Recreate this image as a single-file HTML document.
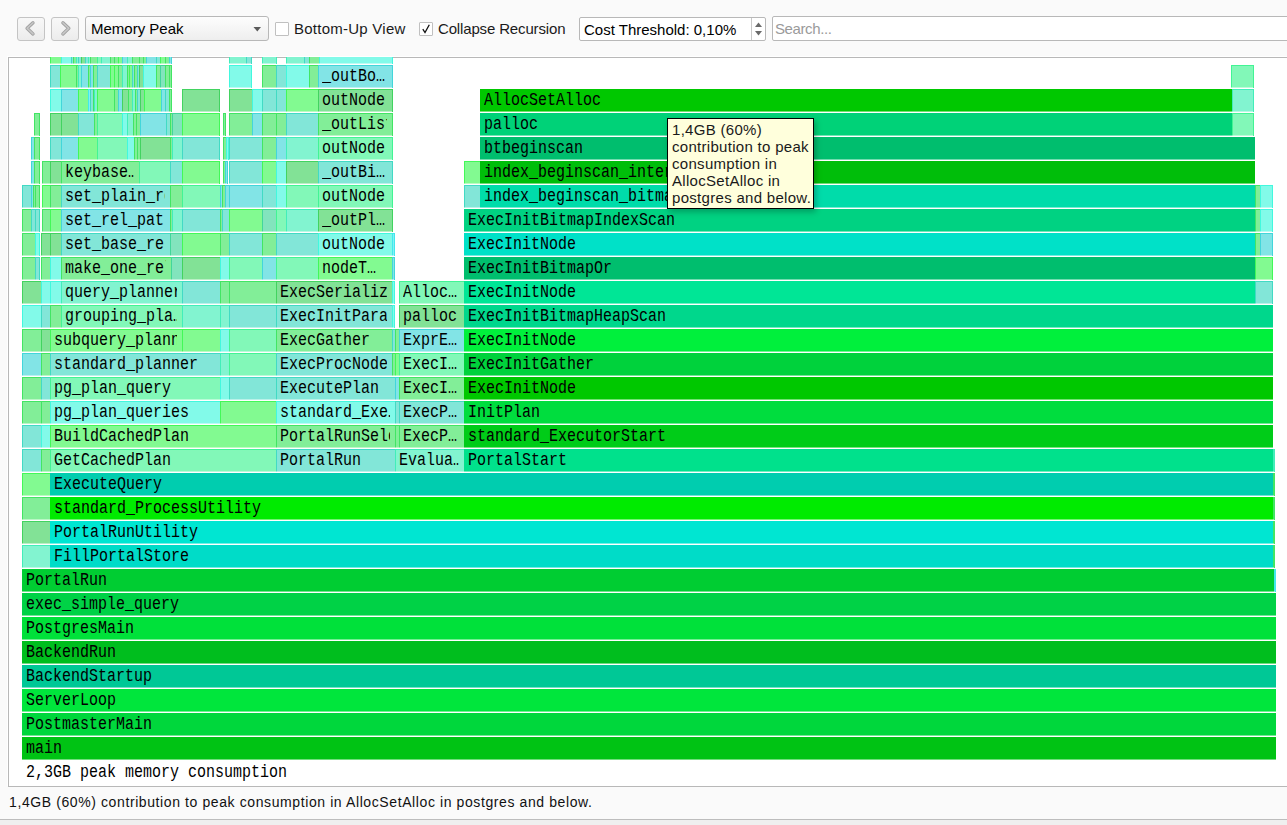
<!DOCTYPE html>
<html><head><meta charset="utf-8">
<style>
html,body{margin:0;padding:0;}
body{width:1287px;height:825px;background:#fafafa;position:relative;overflow:hidden;font-family:"Liberation Sans",sans-serif;}
.abs{position:absolute;}
.btn{position:absolute;top:17px;width:26px;height:22px;border:1px solid #c4c4c4;border-radius:3px;background:linear-gradient(#f8f8f8,#ececec);}
.combo{position:absolute;left:85px;top:16px;width:182px;height:23px;border:1px solid #b8b8b8;border-radius:3px;background:linear-gradient(#fdfdfd,#eeeeee);}
.lbl{position:absolute;font-size:15px;color:#1a1a1a;white-space:nowrap;}
.chk{position:absolute;top:22px;width:12px;height:12px;border:1px solid #c0c0c0;background:#fff;border-radius:1px;}
.frame{position:absolute;left:8px;top:57px;width:1300px;height:728px;border:1px solid #b8b8b8;background:#fff;box-shadow:-1px -1px 0 #ffffff;}
.b{position:absolute;box-sizing:border-box;font-family:"Liberation Mono",monospace;font-size:15px;line-height:23px;padding-left:0;color:#000;white-space:nowrap;overflow:hidden;}
.b span{position:relative;top:1px;margin-left:4px;transform:scaleY(1.17);transform-origin:0 16px;}
.tip{position:absolute;left:667px;top:118px;width:147px;height:91px;border:1px solid #000;background:#ffffdc;font-size:15px;line-height:17px;letter-spacing:0.3px;color:#1a1a1a;padding:2px 0 0 4px;box-sizing:border-box;box-shadow:2px 3px 6px rgba(0,0,0,0.25);}
</style></head><body>
<!-- toolbar -->
<div class="btn" style="left:17px"><svg width="26" height="22" style="position:absolute;left:0;top:0"><path d="M15 4.8 L9.1 10.3 L15 15.9" fill="none" stroke="#a2a2a2" stroke-width="3.4" stroke-linecap="round" stroke-linejoin="round"/><path d="M15 4.8 L9.1 10.3 L15 15.9" fill="none" stroke="#c8c8c8" stroke-width="1.5" stroke-linecap="round" stroke-linejoin="round"/></svg></div>
<div class="btn" style="left:51px"><svg width="26" height="22" style="position:absolute;left:0;top:0"><path d="M10.9 4.8 L16.8 10.3 L10.9 15.9" fill="none" stroke="#a2a2a2" stroke-width="3.4" stroke-linecap="round" stroke-linejoin="round"/><path d="M10.9 4.8 L16.8 10.3 L10.9 15.9" fill="none" stroke="#c8c8c8" stroke-width="1.5" stroke-linecap="round" stroke-linejoin="round"/></svg></div>
<div class="combo"><span class="lbl" style="left:5px;top:3px;color:#000">Memory Peak</span><svg width="10" height="6" style="position:absolute;left:167px;top:10px"><path d="M0.5 0 L8 0 L4.25 4.5 Z" fill="#5a5a5a"/></svg></div>
<div class="chk" style="left:275px"></div>
<span class="lbl" style="left:294px;top:20px;letter-spacing:0.25px">Bottom-Up View</span>
<div class="chk" style="left:419px"><svg width="12" height="12" style="position:absolute;left:0;top:0"><path d="M2.8 6.2 L5 9.6 L9.3 1.8" fill="none" stroke="#111" stroke-width="1.3"/></svg></div>
<span class="lbl" style="left:438px;top:20px;letter-spacing:-0.15px">Collapse Recursion</span>
<div class="abs" style="left:579px;top:17px;width:185px;height:22px;border:1px solid #b8b8b8;border-radius:2px;background:#fff;"></div>
<span class="lbl" style="left:584px;top:21px;color:#000">Cost Threshold: 0,10%</span>
<div class="abs" style="left:751px;top:18px;width:1px;height:22px;background:#c8c8c8"></div>
<svg class="abs" style="left:752px;top:18px" width="13" height="22"><path d="M3 9 L6.5 4.5 L10 9 Z" fill="#6a6a6a"/><path d="M3 13 L6.5 17.5 L10 13 Z" fill="#6a6a6a"/></svg>
<div class="abs" style="left:772px;top:16px;width:1300px;height:23px;border:1px solid #b8b8b8;border-radius:2px;background:#fff;"></div>
<span class="lbl" style="left:775px;top:20px;color:#9a9a9a;letter-spacing:-0.4px">Search...</span>
<!-- frame -->
<div class="frame"></div>
<div class="b" style="left:22px;top:737px;width:1254px;height:23px;background:#00c314;box-shadow:inset 0 -1px 0 rgba(255,255,255,0.45)"><span style="display:block;width:1245px;overflow:hidden">main</span></div>
<div class="b" style="left:22px;top:713px;width:1254px;height:23px;background:#00d73c;box-shadow:inset 0 -1px 0 rgba(255,255,255,0.45)"><span style="display:block;width:1245px;overflow:hidden">PostmasterMain</span></div>
<div class="b" style="left:22px;top:689px;width:1254px;height:23px;background:#00e63c;box-shadow:inset 0 -1px 0 rgba(255,255,255,0.45)"><span style="display:block;width:1245px;overflow:hidden">ServerLoop</span></div>
<div class="b" style="left:22px;top:665px;width:1254px;height:23px;background:#00c896;box-shadow:inset 0 -1px 0 rgba(255,255,255,0.45)"><span style="display:block;width:1245px;overflow:hidden">BackendStartup</span></div>
<div class="b" style="left:22px;top:641px;width:1254px;height:23px;background:#00be1e;box-shadow:inset 0 -1px 0 rgba(255,255,255,0.45)"><span style="display:block;width:1245px;overflow:hidden">BackendRun</span></div>
<div class="b" style="left:22px;top:617px;width:1254px;height:23px;background:#00e13a;box-shadow:inset 0 -1px 0 rgba(255,255,255,0.45)"><span style="display:block;width:1245px;overflow:hidden">PostgresMain</span></div>
<div class="b" style="left:22px;top:593px;width:1254px;height:23px;background:#00d246;box-shadow:inset 0 -1px 0 rgba(255,255,255,0.45)"><span style="display:block;width:1245px;overflow:hidden">exec_simple_query</span></div>
<div class="b" style="left:22px;top:569px;width:1252px;height:23px;background:#00cd32;box-shadow:inset 0 -1px 0 rgba(255,255,255,0.45)"><span style="display:block;width:1243px;overflow:hidden">PortalRun</span></div>
<div class="b" style="left:1274px;top:569px;width:1px;height:23px;background:#82f0f3;box-shadow:inset 0 -1px 0 rgba(255,255,255,0.45),inset 1px 1px 0 #42e9ec,1px 0 0 0 #42e9ec"></div>
<div class="b" style="left:22px;top:545px;width:28px;height:23px;background:#82f4d0;box-shadow:inset 0 -1px 0 rgba(255,255,255,0.45),inset 1px 1px 0 #42eeb9,1px 0 0 0 #42eeb9"></div>
<div class="b" style="left:50px;top:545px;width:1223px;height:23px;background:#00dcc8;box-shadow:inset 0 -1px 0 rgba(255,255,255,0.45)"><span style="display:block;width:1214px;overflow:hidden">FillPortalStore</span></div>
<div class="b" style="left:1273px;top:545px;width:1px;height:23px;background:#82ee98;box-shadow:inset 0 -1px 0 rgba(255,255,255,0.45),inset 1px 1px 0 #42e564,1px 0 0 0 #42e564"></div>
<div class="b" style="left:22px;top:521px;width:28px;height:23px;background:#82e296;box-shadow:inset 0 -1px 0 rgba(255,255,255,0.45),inset 1px 1px 0 #42d360,1px 0 0 0 #42d360"></div>
<div class="b" style="left:50px;top:521px;width:1223px;height:23px;background:#00e6d2;box-shadow:inset 0 -1px 0 rgba(255,255,255,0.45)"><span style="display:block;width:1214px;overflow:hidden">PortalRunUtility</span></div>
<div class="b" style="left:1273px;top:521px;width:1px;height:23px;background:#82ee98;box-shadow:inset 0 -1px 0 rgba(255,255,255,0.45),inset 1px 1px 0 #42e564,1px 0 0 0 #42e564"></div>
<div class="b" style="left:22px;top:497px;width:28px;height:23px;background:#82ee98;box-shadow:inset 0 -1px 0 rgba(255,255,255,0.45),inset 1px 1px 0 #42e564,1px 0 0 0 #42e564"></div>
<div class="b" style="left:50px;top:497px;width:1223px;height:23px;background:#00eb00;box-shadow:inset 0 -1px 0 rgba(255,255,255,0.45)"><span style="display:block;width:1214px;overflow:hidden">standard_ProcessUtility</span></div>
<div class="b" style="left:1273px;top:497px;width:1px;height:23px;background:#82ee98;box-shadow:inset 0 -1px 0 rgba(255,255,255,0.45),inset 1px 1px 0 #42e564,1px 0 0 0 #42e564"></div>
<div class="b" style="left:22px;top:473px;width:28px;height:23px;background:#82fa91;box-shadow:inset 0 -1px 0 rgba(255,255,255,0.45),inset 1px 1px 0 #42f858,1px 0 0 0 #42f858"></div>
<div class="b" style="left:50px;top:473px;width:1223px;height:23px;background:#00cdaf;box-shadow:inset 0 -1px 0 rgba(255,255,255,0.45)"><span style="display:block;width:1214px;overflow:hidden">ExecuteQuery</span></div>
<div class="b" style="left:1273px;top:473px;width:1px;height:23px;background:#82ee98;box-shadow:inset 0 -1px 0 rgba(255,255,255,0.45),inset 1px 1px 0 #42e564,1px 0 0 0 #42e564"></div>
<div class="b" style="left:22px;top:449px;width:19px;height:23px;background:#82e6d8;box-shadow:inset 0 -1px 0 rgba(255,255,255,0.45),inset 1px 1px 0 #42dac4,1px 0 0 0 #42dac4"></div>
<div class="b" style="left:41px;top:449px;width:9px;height:23px;background:#82ee98;box-shadow:inset 0 -1px 0 rgba(255,255,255,0.45),inset 1px 1px 0 #42e564,1px 0 0 0 #42e564"></div>
<div class="b" style="left:50px;top:449px;width:226px;height:23px;background:#82f8b8;box-shadow:inset 0 -1px 0 rgba(255,255,255,0.45),inset 1px 1px 0 #42f494,1px 0 0 0 #42f494"><span style="display:block;width:217px;overflow:hidden">GetCachedPlan</span></div>
<div class="b" style="left:276px;top:449px;width:119px;height:23px;background:#82e6d8;box-shadow:inset 0 -1px 0 rgba(255,255,255,0.45),inset 1px 1px 0 #42dac4,1px 0 0 0 #42dac4"><span style="display:block;width:110px;overflow:hidden">PortalRun</span></div>
<div class="b" style="left:395px;top:449px;width:69px;height:23px;background:#82f4d0;box-shadow:inset 0 -1px 0 rgba(255,255,255,0.45),inset 1px 1px 0 #42eeb9,1px 0 0 0 #42eeb9"><span style="display:block;width:60px;overflow:hidden">Evalua…</span></div>
<div class="b" style="left:464px;top:449px;width:809px;height:23px;background:#00e18c;box-shadow:inset 0 -1px 0 rgba(255,255,255,0.45)"><span style="display:block;width:800px;overflow:hidden">PortalStart</span></div>
<div class="b" style="left:1273px;top:449px;width:1px;height:23px;background:#82f4d0;box-shadow:inset 0 -1px 0 rgba(255,255,255,0.45),inset 1px 1px 0 #42eeb9,1px 0 0 0 #42eeb9"></div>
<div class="b" style="left:22px;top:425px;width:19px;height:23px;background:#82e6d8;box-shadow:inset 0 -1px 0 rgba(255,255,255,0.45),inset 1px 1px 0 #42dac4,1px 0 0 0 #42dac4"></div>
<div class="b" style="left:41px;top:425px;width:9px;height:23px;background:#82fae9;box-shadow:inset 0 -1px 0 rgba(255,255,255,0.45),inset 1px 1px 0 #42f8de,1px 0 0 0 #42f8de"></div>
<div class="b" style="left:50px;top:425px;width:226px;height:23px;background:#82fa91;box-shadow:inset 0 -1px 0 rgba(255,255,255,0.45),inset 1px 1px 0 #42f858,1px 0 0 0 #42f858"><span style="display:block;width:217px;overflow:hidden">BuildCachedPlan</span></div>
<div class="b" style="left:276px;top:425px;width:119px;height:23px;background:#82ee98;box-shadow:inset 0 -1px 0 rgba(255,255,255,0.45),inset 1px 1px 0 #42e564,1px 0 0 0 #42e564"><span style="display:block;width:110px;overflow:hidden">PortalRunSelect</span></div>
<div class="b" style="left:395px;top:425px;width:4px;height:23px;background:#82ee98;box-shadow:inset 0 -1px 0 rgba(255,255,255,0.45),inset 1px 1px 0 #42e564,1px 0 0 0 #42e564"></div>
<div class="b" style="left:399px;top:425px;width:65px;height:23px;background:#82ee98;box-shadow:inset 0 -1px 0 rgba(255,255,255,0.45),inset 1px 1px 0 #42e564,1px 0 0 0 #42e564"><span style="display:block;width:56px;overflow:hidden">ExecP…</span></div>
<div class="b" style="left:464px;top:425px;width:809px;height:23px;background:#00cc18;box-shadow:inset 0 -1px 0 rgba(255,255,255,0.45)"><span style="display:block;width:800px;overflow:hidden">standard_ExecutorStart</span></div>
<div class="b" style="left:22px;top:401px;width:19px;height:23px;background:#82ee98;box-shadow:inset 0 -1px 0 rgba(255,255,255,0.45),inset 1px 1px 0 #42e564,1px 0 0 0 #42e564"></div>
<div class="b" style="left:41px;top:401px;width:9px;height:23px;background:#82ee98;box-shadow:inset 0 -1px 0 rgba(255,255,255,0.45),inset 1px 1px 0 #42e564,1px 0 0 0 #42e564"></div>
<div class="b" style="left:50px;top:401px;width:170px;height:23px;background:#82fae9;box-shadow:inset 0 -1px 0 rgba(255,255,255,0.45),inset 1px 1px 0 #42f8de,1px 0 0 0 #42f8de"><span style="display:block;width:161px;overflow:hidden">pg_plan_queries</span></div>
<div class="b" style="left:220px;top:401px;width:56px;height:23px;background:#82fa91;box-shadow:inset 0 -1px 0 rgba(255,255,255,0.45),inset 1px 1px 0 #42f858,1px 0 0 0 #42f858"></div>
<div class="b" style="left:276px;top:401px;width:119px;height:23px;background:#82fae9;box-shadow:inset 0 -1px 0 rgba(255,255,255,0.45),inset 1px 1px 0 #42f8de,1px 0 0 0 #42f8de"><span style="display:block;width:110px;overflow:hidden">standard_Exe…</span></div>
<div class="b" style="left:395px;top:401px;width:4px;height:23px;background:#82e6d8;box-shadow:inset 0 -1px 0 rgba(255,255,255,0.45),inset 1px 1px 0 #42dac4,1px 0 0 0 #42dac4"></div>
<div class="b" style="left:399px;top:401px;width:65px;height:23px;background:#82e6d8;box-shadow:inset 0 -1px 0 rgba(255,255,255,0.45),inset 1px 1px 0 #42dac4,1px 0 0 0 #42dac4"><span style="display:block;width:56px;overflow:hidden">ExecP…</span></div>
<div class="b" style="left:464px;top:401px;width:809px;height:23px;background:#00dd3e;box-shadow:inset 0 -1px 0 rgba(255,255,255,0.45)"><span style="display:block;width:800px;overflow:hidden">InitPlan</span></div>
<div class="b" style="left:22px;top:377px;width:19px;height:23px;background:#82ee98;box-shadow:inset 0 -1px 0 rgba(255,255,255,0.45),inset 1px 1px 0 #42e564,1px 0 0 0 #42e564"></div>
<div class="b" style="left:41px;top:377px;width:9px;height:23px;background:#82e6d8;box-shadow:inset 0 -1px 0 rgba(255,255,255,0.45),inset 1px 1px 0 #42dac4,1px 0 0 0 #42dac4"></div>
<div class="b" style="left:50px;top:377px;width:170px;height:23px;background:#82f8b8;box-shadow:inset 0 -1px 0 rgba(255,255,255,0.45),inset 1px 1px 0 #42f494,1px 0 0 0 #42f494"><span style="display:block;width:161px;overflow:hidden">pg_plan_query</span></div>
<div class="b" style="left:220px;top:377px;width:9px;height:23px;background:#82fae9;box-shadow:inset 0 -1px 0 rgba(255,255,255,0.45),inset 1px 1px 0 #42f8de,1px 0 0 0 #42f8de"></div>
<div class="b" style="left:229px;top:377px;width:47px;height:23px;background:#82e6d8;box-shadow:inset 0 -1px 0 rgba(255,255,255,0.45),inset 1px 1px 0 #42dac4,1px 0 0 0 #42dac4"></div>
<div class="b" style="left:276px;top:377px;width:119px;height:23px;background:#82e6d8;box-shadow:inset 0 -1px 0 rgba(255,255,255,0.45),inset 1px 1px 0 #42dac4,1px 0 0 0 #42dac4"><span style="display:block;width:110px;overflow:hidden">ExecutePlan</span></div>
<div class="b" style="left:395px;top:377px;width:4px;height:23px;background:#82e4e6;box-shadow:inset 0 -1px 0 rgba(255,255,255,0.45),inset 1px 1px 0 #42d6da,1px 0 0 0 #42d6da"></div>
<div class="b" style="left:399px;top:377px;width:65px;height:23px;background:#82ee98;box-shadow:inset 0 -1px 0 rgba(255,255,255,0.45),inset 1px 1px 0 #42e564,1px 0 0 0 #42e564"><span style="display:block;width:56px;overflow:hidden">ExecI…</span></div>
<div class="b" style="left:464px;top:377px;width:809px;height:23px;background:#00c800;box-shadow:inset 0 -1px 0 rgba(255,255,255,0.45)"><span style="display:block;width:800px;overflow:hidden">ExecInitNode</span></div>
<div class="b" style="left:22px;top:353px;width:19px;height:23px;background:#82e4e6;box-shadow:inset 0 -1px 0 rgba(255,255,255,0.45),inset 1px 1px 0 #42d6da,1px 0 0 0 #42d6da"></div>
<div class="b" style="left:41px;top:353px;width:9px;height:23px;background:#82ee98;box-shadow:inset 0 -1px 0 rgba(255,255,255,0.45),inset 1px 1px 0 #42e564,1px 0 0 0 #42e564"></div>
<div class="b" style="left:50px;top:353px;width:170px;height:23px;background:#82e6d8;box-shadow:inset 0 -1px 0 rgba(255,255,255,0.45),inset 1px 1px 0 #42dac4,1px 0 0 0 #42dac4"><span style="display:block;width:161px;overflow:hidden">standard_planner</span></div>
<div class="b" style="left:220px;top:353px;width:9px;height:23px;background:#82f4d0;box-shadow:inset 0 -1px 0 rgba(255,255,255,0.45),inset 1px 1px 0 #42eeb9,1px 0 0 0 #42eeb9"></div>
<div class="b" style="left:229px;top:353px;width:47px;height:23px;background:#82f8b8;box-shadow:inset 0 -1px 0 rgba(255,255,255,0.45),inset 1px 1px 0 #42f494,1px 0 0 0 #42f494"></div>
<div class="b" style="left:276px;top:353px;width:116px;height:23px;background:#82e6d8;box-shadow:inset 0 -1px 0 rgba(255,255,255,0.45),inset 1px 1px 0 #42dac4,1px 0 0 0 #42dac4"><span style="display:block;width:107px;overflow:hidden">ExecProcNode</span></div>
<div class="b" style="left:392px;top:353px;width:3px;height:23px;background:#82ee98;box-shadow:inset 0 -1px 0 rgba(255,255,255,0.45),inset 1px 1px 0 #42e564,1px 0 0 0 #42e564"></div>
<div class="b" style="left:395px;top:353px;width:4px;height:23px;background:#82fa91;box-shadow:inset 0 -1px 0 rgba(255,255,255,0.45),inset 1px 1px 0 #42f858,1px 0 0 0 #42f858"></div>
<div class="b" style="left:399px;top:353px;width:65px;height:23px;background:#82f8b8;box-shadow:inset 0 -1px 0 rgba(255,255,255,0.45),inset 1px 1px 0 #42f494,1px 0 0 0 #42f494"><span style="display:block;width:56px;overflow:hidden">ExecI…</span></div>
<div class="b" style="left:464px;top:353px;width:809px;height:23px;background:#00d23c;box-shadow:inset 0 -1px 0 rgba(255,255,255,0.45)"><span style="display:block;width:800px;overflow:hidden">ExecInitGather</span></div>
<div class="b" style="left:22px;top:329px;width:19px;height:23px;background:#82ee98;box-shadow:inset 0 -1px 0 rgba(255,255,255,0.45),inset 1px 1px 0 #42e564,1px 0 0 0 #42e564"></div>
<div class="b" style="left:41px;top:329px;width:9px;height:23px;background:#82e296;box-shadow:inset 0 -1px 0 rgba(255,255,255,0.45),inset 1px 1px 0 #42d360,1px 0 0 0 #42d360"></div>
<div class="b" style="left:50px;top:329px;width:132px;height:23px;background:#82fa91;box-shadow:inset 0 -1px 0 rgba(255,255,255,0.45),inset 1px 1px 0 #42f858,1px 0 0 0 #42f858"><span style="display:block;width:123px;overflow:hidden">subquery_planner</span></div>
<div class="b" style="left:182px;top:329px;width:38px;height:23px;background:#82fa91;box-shadow:inset 0 -1px 0 rgba(255,255,255,0.45),inset 1px 1px 0 #42f858,1px 0 0 0 #42f858"></div>
<div class="b" style="left:220px;top:329px;width:9px;height:23px;background:#82fae9;box-shadow:inset 0 -1px 0 rgba(255,255,255,0.45),inset 1px 1px 0 #42f8de,1px 0 0 0 #42f8de"></div>
<div class="b" style="left:229px;top:329px;width:47px;height:23px;background:#82f8b8;box-shadow:inset 0 -1px 0 rgba(255,255,255,0.45),inset 1px 1px 0 #42f494,1px 0 0 0 #42f494"></div>
<div class="b" style="left:276px;top:329px;width:116px;height:23px;background:#82ee98;box-shadow:inset 0 -1px 0 rgba(255,255,255,0.45),inset 1px 1px 0 #42e564,1px 0 0 0 #42e564"><span style="display:block;width:107px;overflow:hidden">ExecGather</span></div>
<div class="b" style="left:392px;top:329px;width:3px;height:23px;background:#82e6d8;box-shadow:inset 0 -1px 0 rgba(255,255,255,0.45),inset 1px 1px 0 #42dac4,1px 0 0 0 #42dac4"></div>
<div class="b" style="left:395px;top:329px;width:4px;height:23px;background:#82ee98;box-shadow:inset 0 -1px 0 rgba(255,255,255,0.45),inset 1px 1px 0 #42e564,1px 0 0 0 #42e564"></div>
<div class="b" style="left:399px;top:329px;width:65px;height:23px;background:#82e4e6;box-shadow:inset 0 -1px 0 rgba(255,255,255,0.45),inset 1px 1px 0 #42d6da,1px 0 0 0 #42d6da"><span style="display:block;width:56px;overflow:hidden">ExprE…</span></div>
<div class="b" style="left:464px;top:329px;width:809px;height:23px;background:#00f03c;box-shadow:inset 0 -1px 0 rgba(255,255,255,0.45)"><span style="display:block;width:800px;overflow:hidden">ExecInitNode</span></div>
<div class="b" style="left:22px;top:305px;width:19px;height:23px;background:#82fae9;box-shadow:inset 0 -1px 0 rgba(255,255,255,0.45),inset 1px 1px 0 #42f8de,1px 0 0 0 #42f8de"></div>
<div class="b" style="left:41px;top:305px;width:9px;height:23px;background:#82e6d8;box-shadow:inset 0 -1px 0 rgba(255,255,255,0.45),inset 1px 1px 0 #42dac4,1px 0 0 0 #42dac4"></div>
<div class="b" style="left:50px;top:305px;width:11px;height:23px;background:#82ee98;box-shadow:inset 0 -1px 0 rgba(255,255,255,0.45),inset 1px 1px 0 #42e564,1px 0 0 0 #42e564"></div>
<div class="b" style="left:61px;top:305px;width:121px;height:23px;background:#82f8b8;box-shadow:inset 0 -1px 0 rgba(255,255,255,0.45),inset 1px 1px 0 #42f494,1px 0 0 0 #42f494"><span style="display:block;width:112px;overflow:hidden">grouping_pla…</span></div>
<div class="b" style="left:182px;top:305px;width:38px;height:23px;background:#82f4d0;box-shadow:inset 0 -1px 0 rgba(255,255,255,0.45),inset 1px 1px 0 #42eeb9,1px 0 0 0 #42eeb9"></div>
<div class="b" style="left:220px;top:305px;width:9px;height:23px;background:#82f4d0;box-shadow:inset 0 -1px 0 rgba(255,255,255,0.45),inset 1px 1px 0 #42eeb9,1px 0 0 0 #42eeb9"></div>
<div class="b" style="left:229px;top:305px;width:47px;height:23px;background:#82e6d8;box-shadow:inset 0 -1px 0 rgba(255,255,255,0.45),inset 1px 1px 0 #42dac4,1px 0 0 0 #42dac4"></div>
<div class="b" style="left:276px;top:305px;width:116px;height:23px;background:#82e6d8;box-shadow:inset 0 -1px 0 rgba(255,255,255,0.45),inset 1px 1px 0 #42dac4,1px 0 0 0 #42dac4"><span style="display:block;width:107px;overflow:hidden">ExecInitParallelPlan</span></div>
<div class="b" style="left:392px;top:305px;width:2px;height:23px;background:#82fae9;box-shadow:inset 0 -1px 0 rgba(255,255,255,0.45),inset 1px 1px 0 #42f8de,1px 0 0 0 #42f8de"></div>
<div class="b" style="left:399px;top:305px;width:65px;height:23px;background:#82e296;box-shadow:inset 0 -1px 0 rgba(255,255,255,0.45),inset 1px 1px 0 #42d360,1px 0 0 0 #42d360"><span style="display:block;width:56px;overflow:hidden">palloc</span></div>
<div class="b" style="left:464px;top:305px;width:809px;height:23px;background:#00d78c;box-shadow:inset 0 -1px 0 rgba(255,255,255,0.45)"><span style="display:block;width:800px;overflow:hidden">ExecInitBitmapHeapScan</span></div>
<div class="b" style="left:22px;top:281px;width:19px;height:23px;background:#82e296;box-shadow:inset 0 -1px 0 rgba(255,255,255,0.45),inset 1px 1px 0 #42d360,1px 0 0 0 #42d360"></div>
<div class="b" style="left:41px;top:281px;width:9px;height:23px;background:#82fae9;box-shadow:inset 0 -1px 0 rgba(255,255,255,0.45),inset 1px 1px 0 #42f8de,1px 0 0 0 #42f8de"></div>
<div class="b" style="left:50px;top:281px;width:11px;height:23px;background:#82fae9;box-shadow:inset 0 -1px 0 rgba(255,255,255,0.45),inset 1px 1px 0 #42f8de,1px 0 0 0 #42f8de"></div>
<div class="b" style="left:61px;top:281px;width:121px;height:23px;background:#82f4d0;box-shadow:inset 0 -1px 0 rgba(255,255,255,0.45),inset 1px 1px 0 #42eeb9,1px 0 0 0 #42eeb9"><span style="display:block;width:112px;overflow:hidden">query_planner</span></div>
<div class="b" style="left:182px;top:281px;width:38px;height:23px;background:#82e6d8;box-shadow:inset 0 -1px 0 rgba(255,255,255,0.45),inset 1px 1px 0 #42dac4,1px 0 0 0 #42dac4"></div>
<div class="b" style="left:220px;top:281px;width:9px;height:23px;background:#82ee98;box-shadow:inset 0 -1px 0 rgba(255,255,255,0.45),inset 1px 1px 0 #42e564,1px 0 0 0 #42e564"></div>
<div class="b" style="left:229px;top:281px;width:47px;height:23px;background:#82ee98;box-shadow:inset 0 -1px 0 rgba(255,255,255,0.45),inset 1px 1px 0 #42e564,1px 0 0 0 #42e564"></div>
<div class="b" style="left:276px;top:281px;width:116px;height:23px;background:#82e296;box-shadow:inset 0 -1px 0 rgba(255,255,255,0.45),inset 1px 1px 0 #42d360,1px 0 0 0 #42d360"><span style="display:block;width:107px;overflow:hidden">ExecSerializePlan</span></div>
<div class="b" style="left:392px;top:281px;width:2px;height:23px;background:#82fae9;box-shadow:inset 0 -1px 0 rgba(255,255,255,0.45),inset 1px 1px 0 #42f8de,1px 0 0 0 #42f8de"></div>
<div class="b" style="left:399px;top:281px;width:65px;height:23px;background:#82f8b8;box-shadow:inset 0 -1px 0 rgba(255,255,255,0.45),inset 1px 1px 0 #42f494,1px 0 0 0 #42f494"><span style="display:block;width:56px;overflow:hidden">Alloc…</span></div>
<div class="b" style="left:464px;top:281px;width:791px;height:23px;background:#00e696;box-shadow:inset 0 -1px 0 rgba(255,255,255,0.45)"><span style="display:block;width:782px;overflow:hidden">ExecInitNode</span></div>
<div class="b" style="left:1255px;top:281px;width:17px;height:23px;background:#82e6d8;box-shadow:inset 0 -1px 0 rgba(255,255,255,0.45),inset 1px 1px 0 #42dac4,1px 0 0 0 #42dac4"></div>
<div class="b" style="left:22px;top:257px;width:13px;height:23px;background:#82ee98;box-shadow:inset 0 -1px 0 rgba(255,255,255,0.45),inset 1px 1px 0 #42e564,1px 0 0 0 #42e564"></div>
<div class="b" style="left:35px;top:257px;width:4px;height:23px;background:#82e6d8;box-shadow:inset 0 -1px 0 rgba(255,255,255,0.45),inset 1px 1px 0 #42dac4,1px 0 0 0 #42dac4"></div>
<div class="b" style="left:41px;top:257px;width:9px;height:23px;background:#82ee98;box-shadow:inset 0 -1px 0 rgba(255,255,255,0.45),inset 1px 1px 0 #42e564,1px 0 0 0 #42e564"></div>
<div class="b" style="left:50px;top:257px;width:11px;height:23px;background:#82fae9;box-shadow:inset 0 -1px 0 rgba(255,255,255,0.45),inset 1px 1px 0 #42f8de,1px 0 0 0 #42f8de"></div>
<div class="b" style="left:61px;top:257px;width:110px;height:23px;background:#82ee98;box-shadow:inset 0 -1px 0 rgba(255,255,255,0.45),inset 1px 1px 0 #42e564,1px 0 0 0 #42e564"><span style="display:block;width:101px;overflow:hidden">make_one_rel</span></div>
<div class="b" style="left:171px;top:257px;width:11px;height:23px;background:#82e4bd;box-shadow:inset 0 -1px 0 rgba(255,255,255,0.45),inset 1px 1px 0 #42d69b,1px 0 0 0 #42d69b"></div>
<div class="b" style="left:182px;top:257px;width:38px;height:23px;background:#82e296;box-shadow:inset 0 -1px 0 rgba(255,255,255,0.45),inset 1px 1px 0 #42d360,1px 0 0 0 #42d360"></div>
<div class="b" style="left:220px;top:257px;width:9px;height:23px;background:#82fae9;box-shadow:inset 0 -1px 0 rgba(255,255,255,0.45),inset 1px 1px 0 #42f8de,1px 0 0 0 #42f8de"></div>
<div class="b" style="left:229px;top:257px;width:33px;height:23px;background:#82f8b8;box-shadow:inset 0 -1px 0 rgba(255,255,255,0.45),inset 1px 1px 0 #42f494,1px 0 0 0 #42f494"></div>
<div class="b" style="left:262px;top:257px;width:14px;height:23px;background:#82e4e6;box-shadow:inset 0 -1px 0 rgba(255,255,255,0.45),inset 1px 1px 0 #42d6da,1px 0 0 0 #42d6da"></div>
<div class="b" style="left:276px;top:257px;width:42px;height:23px;background:#82f8b8;box-shadow:inset 0 -1px 0 rgba(255,255,255,0.45),inset 1px 1px 0 #42f494,1px 0 0 0 #42f494"></div>
<div class="b" style="left:318px;top:257px;width:74px;height:23px;background:#82fa91;box-shadow:inset 0 -1px 0 rgba(255,255,255,0.45),inset 1px 1px 0 #42f858,1px 0 0 0 #42f858"><span style="display:block;width:65px;overflow:hidden">nodeT…</span></div>
<div class="b" style="left:392px;top:257px;width:2px;height:23px;background:#82e4e6;box-shadow:inset 0 -1px 0 rgba(255,255,255,0.45),inset 1px 1px 0 #42d6da,1px 0 0 0 #42d6da"></div>
<div class="b" style="left:464px;top:257px;width:791px;height:23px;background:#00be6e;box-shadow:inset 0 -1px 0 rgba(255,255,255,0.45)"><span style="display:block;width:782px;overflow:hidden">ExecInitBitmapOr</span></div>
<div class="b" style="left:1255px;top:257px;width:17px;height:23px;background:#82fa91;box-shadow:inset 0 -1px 0 rgba(255,255,255,0.45),inset 1px 1px 0 #42f858,1px 0 0 0 #42f858"></div>
<div class="b" style="left:22px;top:233px;width:13px;height:23px;background:#82ee98;box-shadow:inset 0 -1px 0 rgba(255,255,255,0.45),inset 1px 1px 0 #42e564,1px 0 0 0 #42e564"></div>
<div class="b" style="left:35px;top:233px;width:4px;height:23px;background:#82fae9;box-shadow:inset 0 -1px 0 rgba(255,255,255,0.45),inset 1px 1px 0 #42f8de,1px 0 0 0 #42f8de"></div>
<div class="b" style="left:41px;top:233px;width:9px;height:23px;background:#82e296;box-shadow:inset 0 -1px 0 rgba(255,255,255,0.45),inset 1px 1px 0 #42d360,1px 0 0 0 #42d360"></div>
<div class="b" style="left:50px;top:233px;width:11px;height:23px;background:#82e296;box-shadow:inset 0 -1px 0 rgba(255,255,255,0.45),inset 1px 1px 0 #42d360,1px 0 0 0 #42d360"></div>
<div class="b" style="left:61px;top:233px;width:109px;height:23px;background:#82e6d8;box-shadow:inset 0 -1px 0 rgba(255,255,255,0.45),inset 1px 1px 0 #42dac4,1px 0 0 0 #42dac4"><span style="display:block;width:100px;overflow:hidden">set_base_rel</span></div>
<div class="b" style="left:170px;top:233px;width:12px;height:23px;background:#82e4bd;box-shadow:inset 0 -1px 0 rgba(255,255,255,0.45),inset 1px 1px 0 #42d69b,1px 0 0 0 #42d69b"></div>
<div class="b" style="left:182px;top:233px;width:38px;height:23px;background:#82fa91;box-shadow:inset 0 -1px 0 rgba(255,255,255,0.45),inset 1px 1px 0 #42f858,1px 0 0 0 #42f858"></div>
<div class="b" style="left:220px;top:233px;width:9px;height:23px;background:#82ee98;box-shadow:inset 0 -1px 0 rgba(255,255,255,0.45),inset 1px 1px 0 #42e564,1px 0 0 0 #42e564"></div>
<div class="b" style="left:229px;top:233px;width:33px;height:23px;background:#82e6d8;box-shadow:inset 0 -1px 0 rgba(255,255,255,0.45),inset 1px 1px 0 #42dac4,1px 0 0 0 #42dac4"></div>
<div class="b" style="left:262px;top:233px;width:14px;height:23px;background:#82ee98;box-shadow:inset 0 -1px 0 rgba(255,255,255,0.45),inset 1px 1px 0 #42e564,1px 0 0 0 #42e564"></div>
<div class="b" style="left:276px;top:233px;width:42px;height:23px;background:#82e6d8;box-shadow:inset 0 -1px 0 rgba(255,255,255,0.45),inset 1px 1px 0 #42dac4,1px 0 0 0 #42dac4"></div>
<div class="b" style="left:318px;top:233px;width:74px;height:23px;background:#82fae9;box-shadow:inset 0 -1px 0 rgba(255,255,255,0.45),inset 1px 1px 0 #42f8de,1px 0 0 0 #42f8de"><span style="display:block;width:65px;overflow:hidden">outNode</span></div>
<div class="b" style="left:392px;top:233px;width:2px;height:23px;background:#82f0f3;box-shadow:inset 0 -1px 0 rgba(255,255,255,0.45),inset 1px 1px 0 #42e9ec,1px 0 0 0 #42e9ec"></div>
<div class="b" style="left:464px;top:233px;width:791px;height:23px;background:#00e1c8;box-shadow:inset 0 -1px 0 rgba(255,255,255,0.45)"><span style="display:block;width:782px;overflow:hidden">ExecInitNode</span></div>
<div class="b" style="left:1255px;top:233px;width:5px;height:23px;background:#82ee98;box-shadow:inset 0 -1px 0 rgba(255,255,255,0.45),inset 1px 1px 0 #42e564,1px 0 0 0 #42e564"></div>
<div class="b" style="left:1260px;top:233px;width:12px;height:23px;background:#82e4e6;box-shadow:inset 0 -1px 0 rgba(255,255,255,0.45),inset 1px 1px 0 #42d6da,1px 0 0 0 #42d6da"></div>
<div class="b" style="left:22px;top:209px;width:9px;height:23px;background:#82ee98;box-shadow:inset 0 -1px 0 rgba(255,255,255,0.45),inset 1px 1px 0 #42e564,1px 0 0 0 #42e564"></div>
<div class="b" style="left:31px;top:209px;width:4px;height:23px;background:#82e6d8;box-shadow:inset 0 -1px 0 rgba(255,255,255,0.45),inset 1px 1px 0 #42dac4,1px 0 0 0 #42dac4"></div>
<div class="b" style="left:35px;top:209px;width:4px;height:23px;background:#82e6d8;box-shadow:inset 0 -1px 0 rgba(255,255,255,0.45),inset 1px 1px 0 #42dac4,1px 0 0 0 #42dac4"></div>
<div class="b" style="left:42px;top:209px;width:8px;height:23px;background:#82ee98;box-shadow:inset 0 -1px 0 rgba(255,255,255,0.45),inset 1px 1px 0 #42e564,1px 0 0 0 #42e564"></div>
<div class="b" style="left:50px;top:209px;width:11px;height:23px;background:#82fa91;box-shadow:inset 0 -1px 0 rgba(255,255,255,0.45),inset 1px 1px 0 #42f858,1px 0 0 0 #42f858"></div>
<div class="b" style="left:61px;top:209px;width:109px;height:23px;background:#82e4e6;box-shadow:inset 0 -1px 0 rgba(255,255,255,0.45),inset 1px 1px 0 #42d6da,1px 0 0 0 #42d6da"><span style="display:block;width:100px;overflow:hidden">set_rel_pat</span></div>
<div class="b" style="left:170px;top:209px;width:2px;height:23px;background:#82ee98;box-shadow:inset 0 -1px 0 rgba(255,255,255,0.45),inset 1px 1px 0 #42e564,1px 0 0 0 #42e564"></div>
<div class="b" style="left:172px;top:209px;width:10px;height:23px;background:#82f4d0;box-shadow:inset 0 -1px 0 rgba(255,255,255,0.45),inset 1px 1px 0 #42eeb9,1px 0 0 0 #42eeb9"></div>
<div class="b" style="left:182px;top:209px;width:38px;height:23px;background:#82e6d8;box-shadow:inset 0 -1px 0 rgba(255,255,255,0.45),inset 1px 1px 0 #42dac4,1px 0 0 0 #42dac4"></div>
<div class="b" style="left:220px;top:209px;width:2px;height:23px;background:#82ee98;box-shadow:inset 0 -1px 0 rgba(255,255,255,0.45),inset 1px 1px 0 #42e564,1px 0 0 0 #42e564"></div>
<div class="b" style="left:222px;top:209px;width:7px;height:23px;background:#82e6d8;box-shadow:inset 0 -1px 0 rgba(255,255,255,0.45),inset 1px 1px 0 #42dac4,1px 0 0 0 #42dac4"></div>
<div class="b" style="left:229px;top:209px;width:33px;height:23px;background:#82fa91;box-shadow:inset 0 -1px 0 rgba(255,255,255,0.45),inset 1px 1px 0 #42f858,1px 0 0 0 #42f858"></div>
<div class="b" style="left:262px;top:209px;width:14px;height:23px;background:#82e4bd;box-shadow:inset 0 -1px 0 rgba(255,255,255,0.45),inset 1px 1px 0 #42d69b,1px 0 0 0 #42d69b"></div>
<div class="b" style="left:276px;top:209px;width:10px;height:23px;background:#82f8b8;box-shadow:inset 0 -1px 0 rgba(255,255,255,0.45),inset 1px 1px 0 #42f494,1px 0 0 0 #42f494"></div>
<div class="b" style="left:286px;top:209px;width:32px;height:23px;background:#82f4d0;box-shadow:inset 0 -1px 0 rgba(255,255,255,0.45),inset 1px 1px 0 #42eeb9,1px 0 0 0 #42eeb9"></div>
<div class="b" style="left:318px;top:209px;width:74px;height:23px;background:#82e296;box-shadow:inset 0 -1px 0 rgba(255,255,255,0.45),inset 1px 1px 0 #42d360,1px 0 0 0 #42d360"><span style="display:block;width:65px;overflow:hidden">_outPl…</span></div>
<div class="b" style="left:464px;top:209px;width:791px;height:23px;background:#00d282;box-shadow:inset 0 -1px 0 rgba(255,255,255,0.45)"><span style="display:block;width:782px;overflow:hidden">ExecInitBitmapIndexScan</span></div>
<div class="b" style="left:1255px;top:209px;width:5px;height:23px;background:#82ee98;box-shadow:inset 0 -1px 0 rgba(255,255,255,0.45),inset 1px 1px 0 #42e564,1px 0 0 0 #42e564"></div>
<div class="b" style="left:1260px;top:209px;width:12px;height:23px;background:#82fae9;box-shadow:inset 0 -1px 0 rgba(255,255,255,0.45),inset 1px 1px 0 #42f8de,1px 0 0 0 #42f8de"></div>
<div class="b" style="left:22px;top:185px;width:9px;height:23px;background:#82e6d8;box-shadow:inset 0 -1px 0 rgba(255,255,255,0.45),inset 1px 1px 0 #42dac4,1px 0 0 0 #42dac4"></div>
<div class="b" style="left:31px;top:185px;width:2px;height:23px;background:#82e4e6;box-shadow:inset 0 -1px 0 rgba(255,255,255,0.45),inset 1px 1px 0 #42d6da,1px 0 0 0 #42d6da"></div>
<div class="b" style="left:33px;top:185px;width:2px;height:23px;background:#82ee98;box-shadow:inset 0 -1px 0 rgba(255,255,255,0.45),inset 1px 1px 0 #42e564,1px 0 0 0 #42e564"></div>
<div class="b" style="left:35px;top:185px;width:4px;height:23px;background:#82ee98;box-shadow:inset 0 -1px 0 rgba(255,255,255,0.45),inset 1px 1px 0 #42e564,1px 0 0 0 #42e564"></div>
<div class="b" style="left:42px;top:185px;width:8px;height:23px;background:#82fa91;box-shadow:inset 0 -1px 0 rgba(255,255,255,0.45),inset 1px 1px 0 #42f858,1px 0 0 0 #42f858"></div>
<div class="b" style="left:50px;top:185px;width:11px;height:23px;background:#82ee98;box-shadow:inset 0 -1px 0 rgba(255,255,255,0.45),inset 1px 1px 0 #42e564,1px 0 0 0 #42e564"></div>
<div class="b" style="left:61px;top:185px;width:109px;height:23px;background:#82e6d8;box-shadow:inset 0 -1px 0 rgba(255,255,255,0.45),inset 1px 1px 0 #42dac4,1px 0 0 0 #42dac4"><span style="display:block;width:100px;overflow:hidden">set_plain_rel</span></div>
<div class="b" style="left:170px;top:185px;width:12px;height:23px;background:#82ee98;box-shadow:inset 0 -1px 0 rgba(255,255,255,0.45),inset 1px 1px 0 #42e564,1px 0 0 0 #42e564"></div>
<div class="b" style="left:182px;top:185px;width:38px;height:23px;background:#82f8b8;box-shadow:inset 0 -1px 0 rgba(255,255,255,0.45),inset 1px 1px 0 #42f494,1px 0 0 0 #42f494"></div>
<div class="b" style="left:220px;top:185px;width:2px;height:23px;background:#82e4e6;box-shadow:inset 0 -1px 0 rgba(255,255,255,0.45),inset 1px 1px 0 #42d6da,1px 0 0 0 #42d6da"></div>
<div class="b" style="left:222px;top:185px;width:3px;height:23px;background:#82ee98;box-shadow:inset 0 -1px 0 rgba(255,255,255,0.45),inset 1px 1px 0 #42e564,1px 0 0 0 #42e564"></div>
<div class="b" style="left:225px;top:185px;width:4px;height:23px;background:#82e4e6;box-shadow:inset 0 -1px 0 rgba(255,255,255,0.45),inset 1px 1px 0 #42d6da,1px 0 0 0 #42d6da"></div>
<div class="b" style="left:229px;top:185px;width:33px;height:23px;background:#82e4e6;box-shadow:inset 0 -1px 0 rgba(255,255,255,0.45),inset 1px 1px 0 #42d6da,1px 0 0 0 #42d6da"></div>
<div class="b" style="left:262px;top:185px;width:14px;height:23px;background:#82e6d8;box-shadow:inset 0 -1px 0 rgba(255,255,255,0.45),inset 1px 1px 0 #42dac4,1px 0 0 0 #42dac4"></div>
<div class="b" style="left:276px;top:185px;width:10px;height:23px;background:#82fae9;box-shadow:inset 0 -1px 0 rgba(255,255,255,0.45),inset 1px 1px 0 #42f8de,1px 0 0 0 #42f8de"></div>
<div class="b" style="left:286px;top:185px;width:32px;height:23px;background:#82f8b8;box-shadow:inset 0 -1px 0 rgba(255,255,255,0.45),inset 1px 1px 0 #42f494,1px 0 0 0 #42f494"></div>
<div class="b" style="left:318px;top:185px;width:74px;height:23px;background:#82f8b8;box-shadow:inset 0 -1px 0 rgba(255,255,255,0.45),inset 1px 1px 0 #42f494,1px 0 0 0 #42f494"><span style="display:block;width:65px;overflow:hidden">outNode</span></div>
<div class="b" style="left:464px;top:185px;width:16px;height:23px;background:#82e6d8;box-shadow:inset 0 -1px 0 rgba(255,255,255,0.45),inset 1px 1px 0 #42dac4,1px 0 0 0 #42dac4"></div>
<div class="b" style="left:480px;top:185px;width:775px;height:23px;background:#00dcaa;box-shadow:inset 0 -1px 0 rgba(255,255,255,0.45)"><span style="display:block;width:766px;overflow:hidden">index_beginscan_bitmap</span></div>
<div class="b" style="left:1255px;top:185px;width:5px;height:23px;background:#82ee98;box-shadow:inset 0 -1px 0 rgba(255,255,255,0.45),inset 1px 1px 0 #42e564,1px 0 0 0 #42e564"></div>
<div class="b" style="left:1260px;top:185px;width:12px;height:23px;background:#82fae9;box-shadow:inset 0 -1px 0 rgba(255,255,255,0.45),inset 1px 1px 0 #42f8de,1px 0 0 0 #42f8de"></div>
<div class="b" style="left:31px;top:161px;width:3px;height:23px;background:#82e4e6;box-shadow:inset 0 -1px 0 rgba(255,255,255,0.45),inset 1px 1px 0 #42d6da,1px 0 0 0 #42d6da"></div>
<div class="b" style="left:34px;top:161px;width:5px;height:23px;background:#82ee98;box-shadow:inset 0 -1px 0 rgba(255,255,255,0.45),inset 1px 1px 0 #42e564,1px 0 0 0 #42e564"></div>
<div class="b" style="left:42px;top:161px;width:8px;height:23px;background:#82ee98;box-shadow:inset 0 -1px 0 rgba(255,255,255,0.45),inset 1px 1px 0 #42e564,1px 0 0 0 #42e564"></div>
<div class="b" style="left:50px;top:161px;width:11px;height:23px;background:#82e296;box-shadow:inset 0 -1px 0 rgba(255,255,255,0.45),inset 1px 1px 0 #42d360,1px 0 0 0 #42d360"></div>
<div class="b" style="left:61px;top:161px;width:78px;height:23px;background:#82ee98;box-shadow:inset 0 -1px 0 rgba(255,255,255,0.45),inset 1px 1px 0 #42e564,1px 0 0 0 #42e564"><span style="display:block;width:69px;overflow:hidden">keybase…</span></div>
<div class="b" style="left:139px;top:161px;width:31px;height:23px;background:#82f8b8;box-shadow:inset 0 -1px 0 rgba(255,255,255,0.45),inset 1px 1px 0 #42f494,1px 0 0 0 #42f494"></div>
<div class="b" style="left:170px;top:161px;width:12px;height:23px;background:#82e6d8;box-shadow:inset 0 -1px 0 rgba(255,255,255,0.45),inset 1px 1px 0 #42dac4,1px 0 0 0 #42dac4"></div>
<div class="b" style="left:182px;top:161px;width:37px;height:23px;background:#82fa91;box-shadow:inset 0 -1px 0 rgba(255,255,255,0.45),inset 1px 1px 0 #42f858,1px 0 0 0 #42f858"></div>
<div class="b" style="left:223px;top:161px;width:2px;height:23px;background:#82ee98;box-shadow:inset 0 -1px 0 rgba(255,255,255,0.45),inset 1px 1px 0 #42e564,1px 0 0 0 #42e564"></div>
<div class="b" style="left:225px;top:161px;width:2px;height:23px;background:#82e4e6;box-shadow:inset 0 -1px 0 rgba(255,255,255,0.45),inset 1px 1px 0 #42d6da,1px 0 0 0 #42d6da"></div>
<div class="b" style="left:229px;top:161px;width:33px;height:23px;background:#82e6d8;box-shadow:inset 0 -1px 0 rgba(255,255,255,0.45),inset 1px 1px 0 #42dac4,1px 0 0 0 #42dac4"></div>
<div class="b" style="left:262px;top:161px;width:14px;height:23px;background:#82fa91;box-shadow:inset 0 -1px 0 rgba(255,255,255,0.45),inset 1px 1px 0 #42f858,1px 0 0 0 #42f858"></div>
<div class="b" style="left:276px;top:161px;width:10px;height:23px;background:#82fae9;box-shadow:inset 0 -1px 0 rgba(255,255,255,0.45),inset 1px 1px 0 #42f8de,1px 0 0 0 #42f8de"></div>
<div class="b" style="left:286px;top:161px;width:32px;height:23px;background:#82e296;box-shadow:inset 0 -1px 0 rgba(255,255,255,0.45),inset 1px 1px 0 #42d360,1px 0 0 0 #42d360"></div>
<div class="b" style="left:318px;top:161px;width:74px;height:23px;background:#82e6d8;box-shadow:inset 0 -1px 0 rgba(255,255,255,0.45),inset 1px 1px 0 #42dac4,1px 0 0 0 #42dac4"><span style="display:block;width:65px;overflow:hidden">_outBi…</span></div>
<div class="b" style="left:464px;top:161px;width:16px;height:23px;background:#82fa91;box-shadow:inset 0 -1px 0 rgba(255,255,255,0.45),inset 1px 1px 0 #42f858,1px 0 0 0 #42f858"></div>
<div class="b" style="left:480px;top:161px;width:775px;height:23px;background:#00be0a;box-shadow:inset 0 -1px 0 rgba(255,255,255,0.45)"><span style="display:block;width:766px;overflow:hidden">index_beginscan_internal</span></div>
<div class="b" style="left:31px;top:137px;width:3px;height:23px;background:#82e4e6;box-shadow:inset 0 -1px 0 rgba(255,255,255,0.45),inset 1px 1px 0 #42d6da,1px 0 0 0 #42d6da"></div>
<div class="b" style="left:34px;top:137px;width:5px;height:23px;background:#82ee98;box-shadow:inset 0 -1px 0 rgba(255,255,255,0.45),inset 1px 1px 0 #42e564,1px 0 0 0 #42e564"></div>
<div class="b" style="left:50px;top:137px;width:11px;height:23px;background:#82e6d8;box-shadow:inset 0 -1px 0 rgba(255,255,255,0.45),inset 1px 1px 0 #42dac4,1px 0 0 0 #42dac4"></div>
<div class="b" style="left:61px;top:137px;width:17px;height:23px;background:#82e4e6;box-shadow:inset 0 -1px 0 rgba(255,255,255,0.45),inset 1px 1px 0 #42d6da,1px 0 0 0 #42d6da"></div>
<div class="b" style="left:78px;top:137px;width:19px;height:23px;background:#82fa91;box-shadow:inset 0 -1px 0 rgba(255,255,255,0.45),inset 1px 1px 0 #42f858,1px 0 0 0 #42f858"></div>
<div class="b" style="left:97px;top:137px;width:30px;height:23px;background:#82f8b8;box-shadow:inset 0 -1px 0 rgba(255,255,255,0.45),inset 1px 1px 0 #42f494,1px 0 0 0 #42f494"></div>
<div class="b" style="left:127px;top:137px;width:7px;height:23px;background:#82fae9;box-shadow:inset 0 -1px 0 rgba(255,255,255,0.45),inset 1px 1px 0 #42f8de,1px 0 0 0 #42f8de"></div>
<div class="b" style="left:134px;top:137px;width:3px;height:23px;background:#82ee98;box-shadow:inset 0 -1px 0 rgba(255,255,255,0.45),inset 1px 1px 0 #42e564,1px 0 0 0 #42e564"></div>
<div class="b" style="left:137px;top:137px;width:3px;height:23px;background:#82ee98;box-shadow:inset 0 -1px 0 rgba(255,255,255,0.45),inset 1px 1px 0 #42e564,1px 0 0 0 #42e564"></div>
<div class="b" style="left:140px;top:137px;width:30px;height:23px;background:#82e296;box-shadow:inset 0 -1px 0 rgba(255,255,255,0.45),inset 1px 1px 0 #42d360,1px 0 0 0 #42d360"></div>
<div class="b" style="left:170px;top:137px;width:2px;height:23px;background:#82ee98;box-shadow:inset 0 -1px 0 rgba(255,255,255,0.45),inset 1px 1px 0 #42e564,1px 0 0 0 #42e564"></div>
<div class="b" style="left:172px;top:137px;width:10px;height:23px;background:#82f4d0;box-shadow:inset 0 -1px 0 rgba(255,255,255,0.45),inset 1px 1px 0 #42eeb9,1px 0 0 0 #42eeb9"></div>
<div class="b" style="left:182px;top:137px;width:37px;height:23px;background:#82e6d8;box-shadow:inset 0 -1px 0 rgba(255,255,255,0.45),inset 1px 1px 0 #42dac4,1px 0 0 0 #42dac4"></div>
<div class="b" style="left:223px;top:137px;width:3px;height:23px;background:#82ee98;box-shadow:inset 0 -1px 0 rgba(255,255,255,0.45),inset 1px 1px 0 #42e564,1px 0 0 0 #42e564"></div>
<div class="b" style="left:226px;top:137px;width:2px;height:23px;background:#82fae9;box-shadow:inset 0 -1px 0 rgba(255,255,255,0.45),inset 1px 1px 0 #42f8de,1px 0 0 0 #42f8de"></div>
<div class="b" style="left:229px;top:137px;width:33px;height:23px;background:#82e6d8;box-shadow:inset 0 -1px 0 rgba(255,255,255,0.45),inset 1px 1px 0 #42dac4,1px 0 0 0 #42dac4"></div>
<div class="b" style="left:262px;top:137px;width:14px;height:23px;background:#82ee98;box-shadow:inset 0 -1px 0 rgba(255,255,255,0.45),inset 1px 1px 0 #42e564,1px 0 0 0 #42e564"></div>
<div class="b" style="left:276px;top:137px;width:10px;height:23px;background:#82e4e6;box-shadow:inset 0 -1px 0 rgba(255,255,255,0.45),inset 1px 1px 0 #42d6da,1px 0 0 0 #42d6da"></div>
<div class="b" style="left:286px;top:137px;width:32px;height:23px;background:#82f4d0;box-shadow:inset 0 -1px 0 rgba(255,255,255,0.45),inset 1px 1px 0 #42eeb9,1px 0 0 0 #42eeb9"></div>
<div class="b" style="left:318px;top:137px;width:74px;height:23px;background:#82f8b8;box-shadow:inset 0 -1px 0 rgba(255,255,255,0.45),inset 1px 1px 0 #42f494,1px 0 0 0 #42f494"><span style="display:block;width:65px;overflow:hidden">outNode</span></div>
<div class="b" style="left:480px;top:137px;width:775px;height:23px;background:#00be6e;box-shadow:inset 0 -1px 0 rgba(255,255,255,0.45)"><span style="display:block;width:766px;overflow:hidden">btbeginscan</span></div>
<div class="b" style="left:34px;top:113px;width:5px;height:23px;background:#82ee98;box-shadow:inset 0 -1px 0 rgba(255,255,255,0.45),inset 1px 1px 0 #42e564,1px 0 0 0 #42e564"></div>
<div class="b" style="left:50px;top:113px;width:11px;height:23px;background:#82e296;box-shadow:inset 0 -1px 0 rgba(255,255,255,0.45),inset 1px 1px 0 #42d360,1px 0 0 0 #42d360"></div>
<div class="b" style="left:61px;top:113px;width:17px;height:23px;background:#82e296;box-shadow:inset 0 -1px 0 rgba(255,255,255,0.45),inset 1px 1px 0 #42d360,1px 0 0 0 #42d360"></div>
<div class="b" style="left:78px;top:113px;width:16px;height:23px;background:#82e6d8;box-shadow:inset 0 -1px 0 rgba(255,255,255,0.45),inset 1px 1px 0 #42dac4,1px 0 0 0 #42dac4"></div>
<div class="b" style="left:94px;top:113px;width:3px;height:23px;background:#82ee98;box-shadow:inset 0 -1px 0 rgba(255,255,255,0.45),inset 1px 1px 0 #42e564,1px 0 0 0 #42e564"></div>
<div class="b" style="left:97px;top:113px;width:25px;height:23px;background:#82f8b8;box-shadow:inset 0 -1px 0 rgba(255,255,255,0.45),inset 1px 1px 0 #42f494,1px 0 0 0 #42f494"></div>
<div class="b" style="left:122px;top:113px;width:5px;height:23px;background:#82fae9;box-shadow:inset 0 -1px 0 rgba(255,255,255,0.45),inset 1px 1px 0 #42f8de,1px 0 0 0 #42f8de"></div>
<div class="b" style="left:127px;top:113px;width:6px;height:23px;background:#82f4d0;box-shadow:inset 0 -1px 0 rgba(255,255,255,0.45),inset 1px 1px 0 #42eeb9,1px 0 0 0 #42eeb9"></div>
<div class="b" style="left:133px;top:113px;width:3px;height:23px;background:#82ee98;box-shadow:inset 0 -1px 0 rgba(255,255,255,0.45),inset 1px 1px 0 #42e564,1px 0 0 0 #42e564"></div>
<div class="b" style="left:136px;top:113px;width:4px;height:23px;background:#82ee98;box-shadow:inset 0 -1px 0 rgba(255,255,255,0.45),inset 1px 1px 0 #42e564,1px 0 0 0 #42e564"></div>
<div class="b" style="left:140px;top:113px;width:26px;height:23px;background:#82e4e6;box-shadow:inset 0 -1px 0 rgba(255,255,255,0.45),inset 1px 1px 0 #42d6da,1px 0 0 0 #42d6da"></div>
<div class="b" style="left:166px;top:113px;width:4px;height:23px;background:#82e6d8;box-shadow:inset 0 -1px 0 rgba(255,255,255,0.45),inset 1px 1px 0 #42dac4,1px 0 0 0 #42dac4"></div>
<div class="b" style="left:170px;top:113px;width:2px;height:23px;background:#82ee98;box-shadow:inset 0 -1px 0 rgba(255,255,255,0.45),inset 1px 1px 0 #42e564,1px 0 0 0 #42e564"></div>
<div class="b" style="left:172px;top:113px;width:10px;height:23px;background:#82e4bd;box-shadow:inset 0 -1px 0 rgba(255,255,255,0.45),inset 1px 1px 0 #42d69b,1px 0 0 0 #42d69b"></div>
<div class="b" style="left:182px;top:113px;width:37px;height:23px;background:#82fa91;box-shadow:inset 0 -1px 0 rgba(255,255,255,0.45),inset 1px 1px 0 #42f858,1px 0 0 0 #42f858"></div>
<div class="b" style="left:223px;top:113px;width:2px;height:23px;background:#82ee98;box-shadow:inset 0 -1px 0 rgba(255,255,255,0.45),inset 1px 1px 0 #42e564,1px 0 0 0 #42e564"></div>
<div class="b" style="left:229px;top:113px;width:23px;height:23px;background:#82ee98;box-shadow:inset 0 -1px 0 rgba(255,255,255,0.45),inset 1px 1px 0 #42e564,1px 0 0 0 #42e564"></div>
<div class="b" style="left:252px;top:113px;width:10px;height:23px;background:#82e4e6;box-shadow:inset 0 -1px 0 rgba(255,255,255,0.45),inset 1px 1px 0 #42d6da,1px 0 0 0 #42d6da"></div>
<div class="b" style="left:262px;top:113px;width:14px;height:23px;background:#82ee98;box-shadow:inset 0 -1px 0 rgba(255,255,255,0.45),inset 1px 1px 0 #42e564,1px 0 0 0 #42e564"></div>
<div class="b" style="left:276px;top:113px;width:10px;height:23px;background:#82ee98;box-shadow:inset 0 -1px 0 rgba(255,255,255,0.45),inset 1px 1px 0 #42e564,1px 0 0 0 #42e564"></div>
<div class="b" style="left:286px;top:113px;width:32px;height:23px;background:#82e6d8;box-shadow:inset 0 -1px 0 rgba(255,255,255,0.45),inset 1px 1px 0 #42dac4,1px 0 0 0 #42dac4"></div>
<div class="b" style="left:318px;top:113px;width:74px;height:23px;background:#82ee98;box-shadow:inset 0 -1px 0 rgba(255,255,255,0.45),inset 1px 1px 0 #42e564,1px 0 0 0 #42e564"><span style="display:block;width:65px;overflow:hidden">_outList</span></div>
<div class="b" style="left:480px;top:113px;width:752px;height:23px;background:#00d278;box-shadow:inset 0 -1px 0 rgba(255,255,255,0.45)"><span style="display:block;width:743px;overflow:hidden">palloc</span></div>
<div class="b" style="left:1232px;top:113px;width:21px;height:23px;background:#82f8b8;box-shadow:inset 0 -1px 0 rgba(255,255,255,0.45),inset 1px 1px 0 #42f494,1px 0 0 0 #42f494"></div>
<div class="b" style="left:50px;top:89px;width:11px;height:23px;background:#82fae9;box-shadow:inset 0 -1px 0 rgba(255,255,255,0.45),inset 1px 1px 0 #42f8de,1px 0 0 0 #42f8de"></div>
<div class="b" style="left:61px;top:89px;width:17px;height:23px;background:#82e4e6;box-shadow:inset 0 -1px 0 rgba(255,255,255,0.45),inset 1px 1px 0 #42d6da,1px 0 0 0 #42d6da"></div>
<div class="b" style="left:78px;top:89px;width:10px;height:23px;background:#82fa91;box-shadow:inset 0 -1px 0 rgba(255,255,255,0.45),inset 1px 1px 0 #42f858,1px 0 0 0 #42f858"></div>
<div class="b" style="left:88px;top:89px;width:2px;height:23px;background:#82f0f3;box-shadow:inset 0 -1px 0 rgba(255,255,255,0.45),inset 1px 1px 0 #42e9ec,1px 0 0 0 #42e9ec"></div>
<div class="b" style="left:90px;top:89px;width:3px;height:23px;background:#82e6d8;box-shadow:inset 0 -1px 0 rgba(255,255,255,0.45),inset 1px 1px 0 #42dac4,1px 0 0 0 #42dac4"></div>
<div class="b" style="left:93px;top:89px;width:1px;height:23px;background:#82ee98;box-shadow:inset 0 -1px 0 rgba(255,255,255,0.45),inset 1px 1px 0 #42e564,1px 0 0 0 #42e564"></div>
<div class="b" style="left:94px;top:89px;width:3px;height:23px;background:#82f4d0;box-shadow:inset 0 -1px 0 rgba(255,255,255,0.45),inset 1px 1px 0 #42eeb9,1px 0 0 0 #42eeb9"></div>
<div class="b" style="left:97px;top:89px;width:17px;height:23px;background:#82fa91;box-shadow:inset 0 -1px 0 rgba(255,255,255,0.45),inset 1px 1px 0 #42f858,1px 0 0 0 #42f858"></div>
<div class="b" style="left:114px;top:89px;width:4px;height:23px;background:#82ee98;box-shadow:inset 0 -1px 0 rgba(255,255,255,0.45),inset 1px 1px 0 #42e564,1px 0 0 0 #42e564"></div>
<div class="b" style="left:118px;top:89px;width:4px;height:23px;background:#82e4e6;box-shadow:inset 0 -1px 0 rgba(255,255,255,0.45),inset 1px 1px 0 #42d6da,1px 0 0 0 #42d6da"></div>
<div class="b" style="left:122px;top:89px;width:6px;height:23px;background:#82e296;box-shadow:inset 0 -1px 0 rgba(255,255,255,0.45),inset 1px 1px 0 #42d360,1px 0 0 0 #42d360"></div>
<div class="b" style="left:128px;top:89px;width:4px;height:23px;background:#82ee98;box-shadow:inset 0 -1px 0 rgba(255,255,255,0.45),inset 1px 1px 0 #42e564,1px 0 0 0 #42e564"></div>
<div class="b" style="left:132px;top:89px;width:3px;height:23px;background:#82f4d0;box-shadow:inset 0 -1px 0 rgba(255,255,255,0.45),inset 1px 1px 0 #42eeb9,1px 0 0 0 #42eeb9"></div>
<div class="b" style="left:135px;top:89px;width:2px;height:23px;background:#82ee98;box-shadow:inset 0 -1px 0 rgba(255,255,255,0.45),inset 1px 1px 0 #42e564,1px 0 0 0 #42e564"></div>
<div class="b" style="left:137px;top:89px;width:3px;height:23px;background:#82e6d8;box-shadow:inset 0 -1px 0 rgba(255,255,255,0.45),inset 1px 1px 0 #42dac4,1px 0 0 0 #42dac4"></div>
<div class="b" style="left:140px;top:89px;width:4px;height:23px;background:#82e296;box-shadow:inset 0 -1px 0 rgba(255,255,255,0.45),inset 1px 1px 0 #42d360,1px 0 0 0 #42d360"></div>
<div class="b" style="left:144px;top:89px;width:17px;height:23px;background:#82fa91;box-shadow:inset 0 -1px 0 rgba(255,255,255,0.45),inset 1px 1px 0 #42f858,1px 0 0 0 #42f858"></div>
<div class="b" style="left:161px;top:89px;width:4px;height:23px;background:#82e4e6;box-shadow:inset 0 -1px 0 rgba(255,255,255,0.45),inset 1px 1px 0 #42d6da,1px 0 0 0 #42d6da"></div>
<div class="b" style="left:165px;top:89px;width:4px;height:23px;background:#82e6d8;box-shadow:inset 0 -1px 0 rgba(255,255,255,0.45),inset 1px 1px 0 #42dac4,1px 0 0 0 #42dac4"></div>
<div class="b" style="left:169px;top:89px;width:2px;height:23px;background:#82ee98;box-shadow:inset 0 -1px 0 rgba(255,255,255,0.45),inset 1px 1px 0 #42e564,1px 0 0 0 #42e564"></div>
<div class="b" style="left:182px;top:89px;width:37px;height:23px;background:#82e296;box-shadow:inset 0 -1px 0 rgba(255,255,255,0.45),inset 1px 1px 0 #42d360,1px 0 0 0 #42d360"></div>
<div class="b" style="left:229px;top:89px;width:23px;height:23px;background:#82e296;box-shadow:inset 0 -1px 0 rgba(255,255,255,0.45),inset 1px 1px 0 #42d360,1px 0 0 0 #42d360"></div>
<div class="b" style="left:252px;top:89px;width:10px;height:23px;background:#82fae9;box-shadow:inset 0 -1px 0 rgba(255,255,255,0.45),inset 1px 1px 0 #42f8de,1px 0 0 0 #42f8de"></div>
<div class="b" style="left:262px;top:89px;width:14px;height:23px;background:#82e6d8;box-shadow:inset 0 -1px 0 rgba(255,255,255,0.45),inset 1px 1px 0 #42dac4,1px 0 0 0 #42dac4"></div>
<div class="b" style="left:276px;top:89px;width:10px;height:23px;background:#82e6d8;box-shadow:inset 0 -1px 0 rgba(255,255,255,0.45),inset 1px 1px 0 #42dac4,1px 0 0 0 #42dac4"></div>
<div class="b" style="left:286px;top:89px;width:32px;height:23px;background:#82fa91;box-shadow:inset 0 -1px 0 rgba(255,255,255,0.45),inset 1px 1px 0 #42f858,1px 0 0 0 #42f858"></div>
<div class="b" style="left:318px;top:89px;width:74px;height:23px;background:#82e296;box-shadow:inset 0 -1px 0 rgba(255,255,255,0.45),inset 1px 1px 0 #42d360,1px 0 0 0 #42d360"><span style="display:block;width:65px;overflow:hidden">outNode</span></div>
<div class="b" style="left:480px;top:89px;width:752px;height:23px;background:#00c800;box-shadow:inset 0 -1px 0 rgba(255,255,255,0.45)"><span style="display:block;width:743px;overflow:hidden">AllocSetAlloc</span></div>
<div class="b" style="left:1232px;top:89px;width:21px;height:23px;background:#82f4d0;box-shadow:inset 0 -1px 0 rgba(255,255,255,0.45),inset 1px 1px 0 #42eeb9,1px 0 0 0 #42eeb9"></div>
<div class="b" style="left:50px;top:65px;width:10px;height:23px;background:#82e6d8;box-shadow:inset 0 -1px 0 rgba(255,255,255,0.45),inset 1px 1px 0 #42dac4,1px 0 0 0 #42dac4"></div>
<div class="b" style="left:60px;top:65px;width:16px;height:23px;background:#82fa91;box-shadow:inset 0 -1px 0 rgba(255,255,255,0.45),inset 1px 1px 0 #42f858,1px 0 0 0 #42f858"></div>
<div class="b" style="left:76px;top:65px;width:2px;height:23px;background:#82ee98;box-shadow:inset 0 -1px 0 rgba(255,255,255,0.45),inset 1px 1px 0 #42e564,1px 0 0 0 #42e564"></div>
<div class="b" style="left:78px;top:65px;width:3px;height:23px;background:#82f4d0;box-shadow:inset 0 -1px 0 rgba(255,255,255,0.45),inset 1px 1px 0 #42eeb9,1px 0 0 0 #42eeb9"></div>
<div class="b" style="left:81px;top:65px;width:7px;height:23px;background:#82e4e6;box-shadow:inset 0 -1px 0 rgba(255,255,255,0.45),inset 1px 1px 0 #42d6da,1px 0 0 0 #42d6da"></div>
<div class="b" style="left:88px;top:65px;width:2px;height:23px;background:#82ee98;box-shadow:inset 0 -1px 0 rgba(255,255,255,0.45),inset 1px 1px 0 #42e564,1px 0 0 0 #42e564"></div>
<div class="b" style="left:90px;top:65px;width:3px;height:23px;background:#82e4e6;box-shadow:inset 0 -1px 0 rgba(255,255,255,0.45),inset 1px 1px 0 #42d6da,1px 0 0 0 #42d6da"></div>
<div class="b" style="left:93px;top:65px;width:4px;height:23px;background:#82ee98;box-shadow:inset 0 -1px 0 rgba(255,255,255,0.45),inset 1px 1px 0 #42e564,1px 0 0 0 #42e564"></div>
<div class="b" style="left:97px;top:65px;width:13px;height:23px;background:#82e6d8;box-shadow:inset 0 -1px 0 rgba(255,255,255,0.45),inset 1px 1px 0 #42dac4,1px 0 0 0 #42dac4"></div>
<div class="b" style="left:110px;top:65px;width:4px;height:23px;background:#82fa91;box-shadow:inset 0 -1px 0 rgba(255,255,255,0.45),inset 1px 1px 0 #42f858,1px 0 0 0 #42f858"></div>
<div class="b" style="left:114px;top:65px;width:4px;height:23px;background:#82fa91;box-shadow:inset 0 -1px 0 rgba(255,255,255,0.45),inset 1px 1px 0 #42f858,1px 0 0 0 #42f858"></div>
<div class="b" style="left:118px;top:65px;width:4px;height:23px;background:#82ee98;box-shadow:inset 0 -1px 0 rgba(255,255,255,0.45),inset 1px 1px 0 #42e564,1px 0 0 0 #42e564"></div>
<div class="b" style="left:122px;top:65px;width:5px;height:23px;background:#82f4d0;box-shadow:inset 0 -1px 0 rgba(255,255,255,0.45),inset 1px 1px 0 #42eeb9,1px 0 0 0 #42eeb9"></div>
<div class="b" style="left:127px;top:65px;width:2px;height:23px;background:#82ee98;box-shadow:inset 0 -1px 0 rgba(255,255,255,0.45),inset 1px 1px 0 #42e564,1px 0 0 0 #42e564"></div>
<div class="b" style="left:129px;top:65px;width:3px;height:23px;background:#82fa91;box-shadow:inset 0 -1px 0 rgba(255,255,255,0.45),inset 1px 1px 0 #42f858,1px 0 0 0 #42f858"></div>
<div class="b" style="left:132px;top:65px;width:2px;height:23px;background:#82e6d8;box-shadow:inset 0 -1px 0 rgba(255,255,255,0.45),inset 1px 1px 0 #42dac4,1px 0 0 0 #42dac4"></div>
<div class="b" style="left:134px;top:65px;width:3px;height:23px;background:#82ee98;box-shadow:inset 0 -1px 0 rgba(255,255,255,0.45),inset 1px 1px 0 #42e564,1px 0 0 0 #42e564"></div>
<div class="b" style="left:137px;top:65px;width:2px;height:23px;background:#82e6d8;box-shadow:inset 0 -1px 0 rgba(255,255,255,0.45),inset 1px 1px 0 #42dac4,1px 0 0 0 #42dac4"></div>
<div class="b" style="left:139px;top:65px;width:4px;height:23px;background:#82e296;box-shadow:inset 0 -1px 0 rgba(255,255,255,0.45),inset 1px 1px 0 #42d360,1px 0 0 0 #42d360"></div>
<div class="b" style="left:143px;top:65px;width:13px;height:23px;background:#82fae9;box-shadow:inset 0 -1px 0 rgba(255,255,255,0.45),inset 1px 1px 0 #42f8de,1px 0 0 0 #42f8de"></div>
<div class="b" style="left:156px;top:65px;width:4px;height:23px;background:#82ee98;box-shadow:inset 0 -1px 0 rgba(255,255,255,0.45),inset 1px 1px 0 #42e564,1px 0 0 0 #42e564"></div>
<div class="b" style="left:160px;top:65px;width:5px;height:23px;background:#82e4bd;box-shadow:inset 0 -1px 0 rgba(255,255,255,0.45),inset 1px 1px 0 #42d69b,1px 0 0 0 #42d69b"></div>
<div class="b" style="left:165px;top:65px;width:4px;height:23px;background:#82ee98;box-shadow:inset 0 -1px 0 rgba(255,255,255,0.45),inset 1px 1px 0 #42e564,1px 0 0 0 #42e564"></div>
<div class="b" style="left:169px;top:65px;width:2px;height:23px;background:#82ee98;box-shadow:inset 0 -1px 0 rgba(255,255,255,0.45),inset 1px 1px 0 #42e564,1px 0 0 0 #42e564"></div>
<div class="b" style="left:229px;top:65px;width:22px;height:23px;background:#82fae9;box-shadow:inset 0 -1px 0 rgba(255,255,255,0.45),inset 1px 1px 0 #42f8de,1px 0 0 0 #42f8de"></div>
<div class="b" style="left:262px;top:65px;width:14px;height:23px;background:#82ee98;box-shadow:inset 0 -1px 0 rgba(255,255,255,0.45),inset 1px 1px 0 #42e564,1px 0 0 0 #42e564"></div>
<div class="b" style="left:276px;top:65px;width:10px;height:23px;background:#82e6d8;box-shadow:inset 0 -1px 0 rgba(255,255,255,0.45),inset 1px 1px 0 #42dac4,1px 0 0 0 #42dac4"></div>
<div class="b" style="left:286px;top:65px;width:23px;height:23px;background:#82fae9;box-shadow:inset 0 -1px 0 rgba(255,255,255,0.45),inset 1px 1px 0 #42f8de,1px 0 0 0 #42f8de"></div>
<div class="b" style="left:309px;top:65px;width:9px;height:23px;background:#82ee98;box-shadow:inset 0 -1px 0 rgba(255,255,255,0.45),inset 1px 1px 0 #42e564,1px 0 0 0 #42e564"></div>
<div class="b" style="left:318px;top:65px;width:74px;height:23px;background:#82e4e6;box-shadow:inset 0 -1px 0 rgba(255,255,255,0.45),inset 1px 1px 0 #42d6da,1px 0 0 0 #42d6da"><span style="display:block;width:65px;overflow:hidden">_outBo…</span></div>
<div class="b" style="left:1231px;top:65px;width:22px;height:23px;background:#82f8b8;box-shadow:inset 0 -1px 0 rgba(255,255,255,0.45),inset 1px 1px 0 #42f494,1px 0 0 0 #42f494"></div>
<div class="b" style="left:50px;top:57px;width:11px;height:7px;background:#82fa91;box-shadow:inset 0 -1px 0 rgba(255,255,255,0.45),inset 1px 0 0 #42f858,1px 0 0 0 #42f858"></div>
<div class="b" style="left:61px;top:57px;width:10px;height:7px;background:#82fae9;box-shadow:inset 0 -1px 0 rgba(255,255,255,0.45),inset 1px 0 0 #42f8de,1px 0 0 0 #42f8de"></div>
<div class="b" style="left:71px;top:57px;width:2px;height:7px;background:#82e6d8;box-shadow:inset 0 -1px 0 rgba(255,255,255,0.45),inset 1px 0 0 #42dac4,1px 0 0 0 #42dac4"></div>
<div class="b" style="left:73px;top:57px;width:3px;height:7px;background:#82ee98;box-shadow:inset 0 -1px 0 rgba(255,255,255,0.45),inset 1px 0 0 #42e564,1px 0 0 0 #42e564"></div>
<div class="b" style="left:76px;top:57px;width:2px;height:7px;background:#82f4d0;box-shadow:inset 0 -1px 0 rgba(255,255,255,0.45),inset 1px 0 0 #42eeb9,1px 0 0 0 #42eeb9"></div>
<div class="b" style="left:78px;top:57px;width:3px;height:7px;background:#82e6d8;box-shadow:inset 0 -1px 0 rgba(255,255,255,0.45),inset 1px 0 0 #42dac4,1px 0 0 0 #42dac4"></div>
<div class="b" style="left:81px;top:57px;width:4px;height:7px;background:#82e296;box-shadow:inset 0 -1px 0 rgba(255,255,255,0.45),inset 1px 0 0 #42d360,1px 0 0 0 #42d360"></div>
<div class="b" style="left:85px;top:57px;width:3px;height:7px;background:#82e6d8;box-shadow:inset 0 -1px 0 rgba(255,255,255,0.45),inset 1px 0 0 #42dac4,1px 0 0 0 #42dac4"></div>
<div class="b" style="left:88px;top:57px;width:2px;height:7px;background:#82f4d0;box-shadow:inset 0 -1px 0 rgba(255,255,255,0.45),inset 1px 0 0 #42eeb9,1px 0 0 0 #42eeb9"></div>
<div class="b" style="left:90px;top:57px;width:7px;height:7px;background:#82ee98;box-shadow:inset 0 -1px 0 rgba(255,255,255,0.45),inset 1px 0 0 #42e564,1px 0 0 0 #42e564"></div>
<div class="b" style="left:97px;top:57px;width:4px;height:7px;background:#82f8b8;box-shadow:inset 0 -1px 0 rgba(255,255,255,0.45),inset 1px 0 0 #42f494,1px 0 0 0 #42f494"></div>
<div class="b" style="left:101px;top:57px;width:9px;height:7px;background:#82f4d0;box-shadow:inset 0 -1px 0 rgba(255,255,255,0.45),inset 1px 0 0 #42eeb9,1px 0 0 0 #42eeb9"></div>
<div class="b" style="left:110px;top:57px;width:4px;height:7px;background:#82ee98;box-shadow:inset 0 -1px 0 rgba(255,255,255,0.45),inset 1px 0 0 #42e564,1px 0 0 0 #42e564"></div>
<div class="b" style="left:114px;top:57px;width:4px;height:7px;background:#82ee98;box-shadow:inset 0 -1px 0 rgba(255,255,255,0.45),inset 1px 0 0 #42e564,1px 0 0 0 #42e564"></div>
<div class="b" style="left:118px;top:57px;width:4px;height:7px;background:#82fa91;box-shadow:inset 0 -1px 0 rgba(255,255,255,0.45),inset 1px 0 0 #42f858,1px 0 0 0 #42f858"></div>
<div class="b" style="left:122px;top:57px;width:5px;height:7px;background:#82e4e6;box-shadow:inset 0 -1px 0 rgba(255,255,255,0.45),inset 1px 0 0 #42d6da,1px 0 0 0 #42d6da"></div>
<div class="b" style="left:127px;top:57px;width:5px;height:7px;background:#82f4d0;box-shadow:inset 0 -1px 0 rgba(255,255,255,0.45),inset 1px 0 0 #42eeb9,1px 0 0 0 #42eeb9"></div>
<div class="b" style="left:132px;top:57px;width:7px;height:7px;background:#82ee98;box-shadow:inset 0 -1px 0 rgba(255,255,255,0.45),inset 1px 0 0 #42e564,1px 0 0 0 #42e564"></div>
<div class="b" style="left:139px;top:57px;width:4px;height:7px;background:#82ee98;box-shadow:inset 0 -1px 0 rgba(255,255,255,0.45),inset 1px 0 0 #42e564,1px 0 0 0 #42e564"></div>
<div class="b" style="left:143px;top:57px;width:3px;height:7px;background:#82ee98;box-shadow:inset 0 -1px 0 rgba(255,255,255,0.45),inset 1px 0 0 #42e564,1px 0 0 0 #42e564"></div>
<div class="b" style="left:146px;top:57px;width:10px;height:7px;background:#82e4e6;box-shadow:inset 0 -1px 0 rgba(255,255,255,0.45),inset 1px 0 0 #42d6da,1px 0 0 0 #42d6da"></div>
<div class="b" style="left:156px;top:57px;width:4px;height:7px;background:#82e6d8;box-shadow:inset 0 -1px 0 rgba(255,255,255,0.45),inset 1px 0 0 #42dac4,1px 0 0 0 #42dac4"></div>
<div class="b" style="left:160px;top:57px;width:5px;height:7px;background:#82fa91;box-shadow:inset 0 -1px 0 rgba(255,255,255,0.45),inset 1px 0 0 #42f858,1px 0 0 0 #42f858"></div>
<div class="b" style="left:165px;top:57px;width:4px;height:7px;background:#82ee98;box-shadow:inset 0 -1px 0 rgba(255,255,255,0.45),inset 1px 0 0 #42e564,1px 0 0 0 #42e564"></div>
<div class="b" style="left:169px;top:57px;width:2px;height:7px;background:#82e4e6;box-shadow:inset 0 -1px 0 rgba(255,255,255,0.45),inset 1px 0 0 #42d6da,1px 0 0 0 #42d6da"></div>
<div class="b" style="left:229px;top:57px;width:17px;height:7px;background:#82f4d0;box-shadow:inset 0 -1px 0 rgba(255,255,255,0.45),inset 1px 0 0 #42eeb9,1px 0 0 0 #42eeb9"></div>
<div class="b" style="left:246px;top:57px;width:5px;height:7px;background:#82e6d8;box-shadow:inset 0 -1px 0 rgba(255,255,255,0.45),inset 1px 0 0 #42dac4,1px 0 0 0 #42dac4"></div>
<div class="b" style="left:262px;top:57px;width:14px;height:7px;background:#82f4d0;box-shadow:inset 0 -1px 0 rgba(255,255,255,0.45),inset 1px 0 0 #42eeb9,1px 0 0 0 #42eeb9"></div>
<div class="b" style="left:286px;top:57px;width:18px;height:7px;background:#82f4d0;box-shadow:inset 0 -1px 0 rgba(255,255,255,0.45),inset 1px 0 0 #42eeb9,1px 0 0 0 #42eeb9"></div>
<div class="b" style="left:304px;top:57px;width:5px;height:7px;background:#82e6d8;box-shadow:inset 0 -1px 0 rgba(255,255,255,0.45),inset 1px 0 0 #42dac4,1px 0 0 0 #42dac4"></div>
<div class="b" style="left:309px;top:57px;width:10px;height:7px;background:#82ee98;box-shadow:inset 0 -1px 0 rgba(255,255,255,0.45),inset 1px 0 0 #42e564,1px 0 0 0 #42e564"></div>
<div class="b" style="left:319px;top:57px;width:73px;height:7px;background:#82fae9;box-shadow:inset 0 -1px 0 rgba(255,255,255,0.45),inset 1px 0 0 #42f8de,1px 0 0 0 #42f8de"></div>
<div class="b" style="left:22px;top:761px;width:400px;height:23px;"><span style="display:block;width:380px">2,3GB peak memory consumption</span></div>
<!-- tooltip -->
<div class="tip">1,4GB (60%)<br>contribution to peak<br>consumption in<br>AllocSetAlloc in<br>postgres and below.</div>
<!-- status -->
<span class="lbl" style="left:9px;top:794px;font-size:14px;color:#111;letter-spacing:0.6px">1,4GB (60%) contribution to peak consumption in AllocSetAlloc in postgres and below.</span>
<div class="abs" style="left:0;top:819px;width:1287px;height:1px;background:#bdbdbd"></div>
<div class="abs" style="left:0;top:820px;width:1287px;height:5px;background:#efefef"></div>
</body></html>
